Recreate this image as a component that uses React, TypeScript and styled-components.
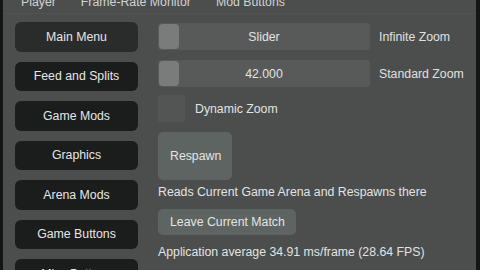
import React from "react";
import styled, { createGlobalStyle } from "styled-components";

const Global = createGlobalStyle`
  html, body { margin: 0; padding: 0; background: #4b4e4d; }
  body { font-family: "Liberation Sans", Arial, sans-serif; }
`;

const Frame = styled.div`
  width: 480px;
  height: 270px;
  box-sizing: border-box;
  background: #4b4e4d;
  border-left: 3px solid #141515;
  border-right: 4px solid #141515;
  overflow: hidden;
  display: flex;
  flex-direction: column;
  color: #e2e3e2;
  font-size: 12.3px;
`;

const TabBar = styled.div`
  flex: none;
  height: 14px;
  display: flex;
  align-items: flex-start;
  gap: 25px;
  padding-left: 18px;
  overflow: hidden;
  border-bottom: 1px solid #505352;
  box-sizing: border-box;
`;

const Tab = styled.span`
  line-height: 14px;
  margin-top: -5px;
  color: #d2d3d2;
  white-space: nowrap;
`;

const Body = styled.div`
  flex: 1;
  min-height: 0;
  display: grid;
  grid-template-columns: 123px 1fr;
  align-items: start;
  column-gap: 20px;
  padding: 8px 0 0 12px;
`;

const Menu = styled.div`
  display: flex;
  flex-direction: column;
  gap: 10px;
`;

const MenuButton = styled.div<{ $active?: boolean }>`
  height: 29.5px;
  flex: none;
  border-radius: 6px;
  background: ${(p) => (p.$active ? "#2a2b2b" : "#1b1c1c")};
  display: flex;
  align-items: center;
  justify-content: center;
  color: #e6e6e6;
`;

const Content = styled.div`
  display: flex;
  flex-direction: column;
`;

const Row = styled.div<{ $mt?: number }>`
  display: flex;
  align-items: center;
  margin-top: ${(p) => p.$mt ?? 0}px;
`;

const Slider = styled.div`
  width: 212px;
  height: 27px;
  background: #575a59;
  border-radius: 3px;
  display: flex;
  align-items: center;
  position: relative;
`;

const Grab = styled.div`
  position: absolute;
  left: 1px;
  top: 1px;
  width: 20px;
  height: 25px;
  border-radius: 4px;
  background: #7a7c7c;
`;

const SliderText = styled.span`
  flex: 1;
  text-align: center;
`;

const Label = styled.span`
  margin-left: 9px;
  color: #e0e1e0;
`;

const Check = styled.div`
  width: 27px;
  height: 27px;
  background: #525554;
  border-radius: 2px;
`;

const CheckLabel = styled.span`
  margin-left: 10px;
`;

const Button = styled.div<{ $h: number; $w: number; $mt: number }>`
  width: ${(p) => p.$w}px;
  height: ${(p) => p.$h}px;
  margin-top: ${(p) => p.$mt}px;
  background: #5d6461;
  border-radius: 5px;
  display: flex;
  align-items: center;
  padding-left: 12px;
  box-sizing: border-box;
  color: #e4e5e4;
`;

const Text = styled.div<{ $mt: number }>`
  margin-top: ${(p) => p.$mt}px;
  line-height: 14px;
`;

export default function App() {
  const menu = [
    "Main Menu",
    "Feed and Splits",
    "Game Mods",
    "Graphics",
    "Arena Mods",
    "Game Buttons",
    "Misc Buttons",
  ];
  return (
    <>
      <Global />
      <Frame>
        <TabBar>
          <Tab>Player</Tab>
          <Tab>Frame-Rate Monitor</Tab>
          <Tab>Mod Buttons</Tab>
        </TabBar>
        <Body>
          <Menu>
            {menu.map((m, i) => (
              <MenuButton key={m} $active={i === 0}>
                {m}
              </MenuButton>
            ))}
          </Menu>
          <Content>
            <Row $mt={1}>
              <Slider>
                <Grab />
                <SliderText>Slider</SliderText>
              </Slider>
              <Label>Infinite Zoom</Label>
            </Row>
            <Row $mt={10}>
              <Slider>
                <Grab />
                <SliderText>42.000</SliderText>
              </Slider>
              <Label>Standard Zoom</Label>
            </Row>
            <Row $mt={8}>
              <Check />
              <CheckLabel>Dynamic Zoom</CheckLabel>
            </Row>
            <Button $w={74} $h={48} $mt={10}>Respawn</Button>
            <Text $mt={5}>Reads Current Game Arena and Respawns there</Text>
            <Button $w={138} $h={26} $mt={10}>Leave Current Match</Button>
            <Text $mt={10}>Application average 34.91 ms/frame (28.64 FPS)</Text>
          </Content>
        </Body>
      </Frame>
    </>
  );
}
